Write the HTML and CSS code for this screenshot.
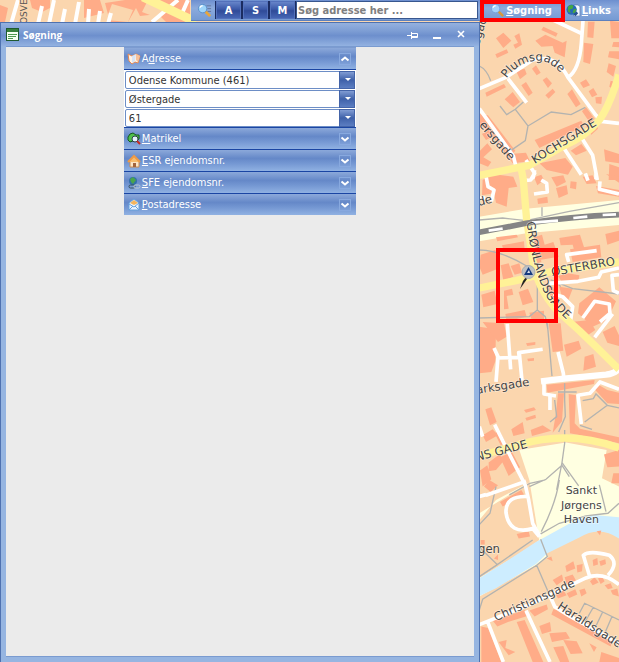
FILE: index.html
```
<!DOCTYPE html>
<html lang="da">
<head>
    <meta charset="UTF-8">
    <meta name="viewport" content="width=device-width, initial-scale=1.0">
    <title>Søgning</title>
    <link rel="stylesheet" href="styles.css">
</head>
<body>
    <svg class="map" viewBox="0 0 619 662" preserveAspectRatio="xMaxYMin slice" role="img" aria-label="Kort">
        <rect class="ground" width="619" height="662"/>

        <!-- nordvestlige hjørne -->
        <path class="building" d="M30 0H50V8L42 12L32 8ZM84 0H100L104 13L84 18ZM105 3L125 0H190V22H166L158 14L140 16L136 8L128 22H110ZM0 5L8 8L5 22H0Z"/>
        <path class="plot" d="M112 4L133 10L128 22L106 20ZM148 0L166 6L158 18L142 12Z"/>
        <path class="road" d="M11 24L18 0M38 24L42 6M49 24L54 0M62 24L65 9M75 24L79 2M88 24L89 9M98 24L100 11M108 24L111 13M152 22L178 0M180 18L188 0"/>
        <path class="road main" d="M143 -3L196 22"/>
        <text class="street" transform="translate(27 24) rotate(-90)">OSVE</text>

        <g transform="translate(476 20) scale(.3333)">
            <!-- park, bane og å -->
            <path class="park" d="M10 590L150 566L429 540V615L150 640L10 664Z"/>
            <path class="park" d="M130 1290L270 1268L392 1290L378 1375L429 1400V1500L190 1565L160 1380Z"/>
            <path class="park" d="M10 1730L190 1630L215 1612L190 1560L150 1590L10 1674ZM165 1385L60 1440L10 1500V1480Z"/>
            <path class="water" d="M10 1675L110 1612L180 1566L300 1500L355 1485L429 1492V1556Q370 1515 310 1553L214 1600L180 1632L60 1705L10 1728Z"/>

            <!-- bygninger -->
            <path class="building" d="M60 55L82 38L106 62L82 84ZM58 103L92 88L97 98L63 114ZM115 48L130 40L138 74L118 86L112 74L126 68ZM178 62L208 44L260 68L272 62L266 112L236 98L230 78L196 80ZM202 20L245 40L240 50L196 30ZM336 5H356L352 54L334 52ZM324 68L352 72L342 132L322 126ZM402 2L429 6V55H406ZM412 66H429V82L408 80ZM400 94H429V118L396 112ZM398 130L420 138L412 170L392 156ZM404 182L424 188L416 210L400 200ZM168 146L180 136L194 158L182 166ZM120 152L146 146L152 162L132 178ZM136 196L150 186L170 218L158 228ZM200 180L212 172L228 190L216 204ZM208 226L230 206L238 216L218 236ZM312 188L330 178L342 196L322 204ZM338 214L352 204L364 224L348 232ZM28 218L84 192L90 202L32 230ZM86 238L110 216L132 246L112 262ZM274 222L288 208L314 252L300 262ZM318 274L330 262L356 296L342 308ZM358 232L378 230L376 252L360 250ZM10 282L36 286L118 392L104 408L10 310ZM176 360L316 302L324 318L190 384ZM330 320L360 306L366 326L346 344ZM284 392L316 372L332 392L300 406ZM190 430L268 414L290 440L276 464L212 450ZM18 342L38 330L46 352L30 360ZM12 392L34 370L48 388L22 412L46 426L36 440L10 430ZM384 388L429 402V430L388 424ZM400 432L429 442V480H398ZM74 382L100 402L150 398L162 424L110 430Z"/>
            <path class="building" d="M48 462L112 470L124 500L98 504L92 560L60 548L54 520L18 526L20 480ZM174 472L196 464L204 480L184 496ZM226 472L262 466L270 486L242 500ZM240 504L272 496L276 522L248 534ZM284 484L302 486L300 508L282 504ZM320 470L350 466L362 490L332 492ZM360 498L429 510V530L366 520ZM390 462L429 470V488ZM184 536L214 530L216 548L186 552ZM60 652L122 644L126 652L64 664ZM78 676L144 664L146 690L84 696ZM174 652L198 644L206 674L232 666L248 710L178 722ZM250 654L312 644L330 700L300 710L290 674L254 676ZM14 704L58 690L66 746L20 764L10 740ZM74 736L98 730L112 770L82 782ZM104 738L130 730L138 758L116 764ZM180 702L192 696L196 726L184 730ZM282 688L372 674L376 712L290 726ZM388 642L429 632V662L394 674ZM246 768L276 760L310 766L308 784L260 790ZM16 824L56 812L64 852L22 862ZM84 812L108 806L112 824L92 828L98 866L84 868ZM128 816L156 806L172 846L140 856ZM88 882L146 870L152 890L92 904ZM214 792L232 802L242 842L226 846ZM250 800L290 806L276 842L258 832ZM310 850L370 802L420 844L394 900L350 920L306 880ZM60 928L10 920V1060L46 1056L58 1024ZM160 878L204 872V900L166 896Z"/>
            <path class="building" d="M218 910H254L262 992L230 996ZM264 974L308 962L316 986L272 1010ZM286 906L340 900L358 930L332 948ZM326 1010L352 1002L360 1040L322 1052ZM380 936L416 918L429 946V978L394 968ZM150 970L178 966V974L154 978ZM154 1016L174 1014V1022L156 1024ZM20 906L84 910L92 950L66 966ZM212 1094L356 1080L354 1092L214 1118ZM360 1090L394 1110L429 1118V1152L394 1150L358 1110ZM246 1120L264 1120L258 1204L230 1238L240 1180ZM278 1122L300 1126L296 1210L312 1226L429 1252V1270L282 1240ZM28 1168L46 1162L62 1206L42 1216ZM144 1170L174 1162L180 1170L150 1178ZM148 1194L178 1184L180 1194L152 1202ZM106 1228L140 1206L146 1240L112 1248ZM164 1230L200 1216L226 1232L168 1248ZM20 1246L50 1228L66 1246L30 1266ZM56 1240L70 1232L90 1270L74 1276ZM38 1328L70 1304L84 1322L60 1350L38 1354ZM72 1312L108 1296L132 1342L98 1368ZM12 1352L34 1336L46 1378L20 1400ZM384 1304L429 1290V1340L394 1342ZM412 1360H429V1390H406ZM40 1380L66 1396L44 1416L24 1400ZM72 1446L136 1410L144 1424L80 1460ZM122 1542L158 1534L162 1550L128 1556ZM14 1560H26V1574H14ZM54 1616L66 1604V1620Z"/>
            <path class="building" d="M362 1534L376 1532L372 1546ZM350 1620L364 1614L366 1634L352 1638ZM370 1624L388 1618L390 1632L374 1638ZM212 1616L226 1610L230 1624ZM268 1638L292 1624L298 1646L272 1656ZM302 1636L320 1632L318 1654L304 1658ZM230 1680L258 1664L262 1682L242 1696ZM266 1672L290 1664L300 1682L272 1692ZM234 1714L260 1708L272 1726L246 1736ZM272 1720L298 1708L304 1724L280 1734ZM310 1710L326 1706L332 1720L316 1730ZM342 1684L356 1672L368 1688L350 1696ZM366 1676L378 1670L386 1684L374 1692ZM386 1696L404 1690L410 1704L396 1708ZM404 1712L424 1706L429 1730L410 1724ZM232 1768L256 1772L412 1858L404 1880L226 1784ZM160 1772L212 1754L216 1768L176 1790ZM16 1820L36 1824L76 1926H16ZM50 1802L146 1770L154 1788L96 1806L64 1820ZM122 1806L146 1800L202 1926H170ZM68 1866L92 1860L88 1884L118 1896L98 1906ZM190 1818L222 1806L226 1834L198 1842ZM220 1840L270 1836L282 1856L228 1866ZM262 1860L302 1864L320 1900L284 1902ZM232 1882L262 1878L280 1926H252ZM340 1870L362 1882L354 1896ZM376 1896L429 1914V1926H370Z"/>

            <!-- stier -->
            <path class="trail" d="M10 138Q32 148 44 182M72 258L92 284L118 268L142 246M118 268L156 318L226 276L285 284L328 262M156 318L148 362L104 392M10 600L80 594L150 602L280 574L429 548M198 562V588M10 690Q70 690 152 738L184 770V870L160 890L10 894M184 870L208 890L216 930M214 910L228 1068M266 1090V1140L268 1190L248 1236M246 1116H302M236 1140L242 1190L222 1206M320 1142L352 1136L360 1122L394 1156L429 1164M394 1156L326 1206M312 1216L348 1228M266 1230V1270L258 1328L242 1410M258 1328L308 1398M258 1336L210 1378L160 1400M258 1336L280 1370M208 1380L162 1390L100 1425M250 1380Q240 1450 196 1535M190 1544L250 1510L330 1488L396 1480L429 1450M370 1395L390 1475M60 1400L42 1480L10 1514M10 1582L64 1634L170 1560M64 1634L10 1670M194 1558L214 1610L182 1636L20 1738L10 1770M182 1636L220 1724M310 1780L326 1750L429 1800M352 1762L328 1804M380 1776L358 1822M408 1790L388 1836M236 780L254 800M224 780L290 806L429 822"/>

            <!-- veje -->
            <path class="road" d="M200 -15L320 42M322 -10L316 70Q310 150 276 172M10 206L90 172L170 120Q240 100 276 172L360 286L376 304L429 310M96 176L152 248M10 266L112 408L120 440M262 382L316 464M312 346L350 406L364 480M150 420L176 460L164 480L140 482M30 468L36 500L54 510L46 544M10 534H28M164 478L172 472L176 450M174 522L214 516L212 490L196 480M328 460L336 482M360 460V478M429 522L370 508L372 484M278 726L272 704L362 692M220 790L306 784L368 772L376 756L429 744M429 764L408 766L412 812L429 820M232 822L260 830L290 860L284 900M320 894L356 844L400 852L402 880L372 906M54 984L66 1010L60 1086M64 1014L130 1012L128 998L200 988M94 912L104 1048M130 1000L138 1082M356 952L410 882M246 996L262 1060L264 1080M204 1082V1122L240 1128M222 1128V1170M429 1108L372 1086L342 1120L306 1126L316 1212M10 1220L20 1250M56 1214L100 1302L148 1396L158 1440L170 1510L192 1550M30 1426L150 1384M30 1424L10 1430M158 1430Q88 1425 90 1478Q100 1546 170 1526L190 1550M10 1814L100 1778L160 1754L330 1674Q380 1654 429 1694M340 1666L322 1606Q340 1590 400 1606Q430 1630 396 1666M36 1808L82 1926M150 1772L222 1926M222 1728L236 1760L280 1788L429 1870"/>
            <path class="road wide" d="M195 1084L264 1076L390 1064Q420 1060 429 1044"/>
            <path class="road main" d="M429 164Q400 260 370 300Q330 350 262 378L160 436L10 466M134 436L142 480L152 600L166 690Q174 800 250 878L310 932L370 990L429 1048M10 804L120 782L220 756L429 726M10 1308L130 1274Q280 1230 429 1284"/>
            <path class="rail" d="M10 637L150 610Q280 590 429 584"/>
            <path class="rail-dash" d="M38 632L80 626M168 608L246 602M292 594L334 590M380 585L420 583"/>

            <!-- gadenavne -->
            <path id="plums" class="guide" d="M92 176Q130 120 196 122Q240 132 286 196"/>
            <path id="groen" class="guide" d="M152 606Q164 720 202 812Q226 866 320 940"/>
            <text class="label"><textPath href="#plums">Plumsgade</textPath></text>
            <text class="label" transform="translate(10 75) rotate(-74)">sgade</text>
            <text class="label" transform="translate(8 316) rotate(49)">ersgade</text>
            <text class="label" transform="translate(176 432) rotate(-32)">KOCHSGADE</text>
            <text class="label" transform="translate(8 558) rotate(-14)">de</text>
            <text class="label"><textPath href="#groen">GRØNLANDSGADE</textPath></text>
            <text class="label" transform="translate(228 768) rotate(-10)">ØSTERBRO</text>
            <text class="label" transform="translate(2 1122) rotate(-9)">arksgade</text>
            <text class="label" transform="translate(2 1324) rotate(-15)">NS GADE</text>
            <text class="label place" x="316" y="1422">Sankt</text>
            <text class="label place" x="316" y="1466">Jørgens</text>
            <text class="label place" x="316" y="1510">Haven</text>
            <text class="label" x="6" y="1600">gen</text>
            <text class="label" transform="translate(60 1804) rotate(-24)">Christiansgade</text>
            <text class="label" transform="translate(242 1764) rotate(33)">Haraldsgade</text>
        </g>

        <!-- fundet adresse -->
        <path d="M520 289L523 281L526 277L527 279Z" fill="#222"/>
        <circle cx="528.500" cy="272" r="6.500" fill="#bdc1c5" stroke="#a9adb2"/>
        <path d="M524 275L528.500 267L533 275Z" fill="#143a80"/>
        <path d="M527 273L529 270L530 273Z" fill="#dce3ee"/>
        <rect class="marker" x="498" y="250" width="58" height="71"/>
    </svg>

    <div class="app">
        <header class="toolbar">
            <svg class="icon" viewBox="0 0 16 16" aria-hidden="true">
                <path d="M10 3H15M11 6H15M11 9H15" stroke="#62759c"/>
                <path d="M9 9L14 14" stroke="#e9a63a" stroke-width="3"/>
                <circle cx="6" cy="6" r="4.500" fill="#9ed5fa" stroke="#5a8fca"/>
                <path d="M3 5Q4 3 6 3" stroke="#fff" fill="none" stroke-width="1.500"/>
            </svg>
            <div class="modes">
                <button class="mode">A</button>
                <button class="mode">S</button>
                <button class="mode">M</button>
            </div>
            <input class="search" type="text" aria-label="Søg adresse" placeholder="Søg adresse her ...">
            <button class="tool tool-search">
                <svg class="icon" viewBox="0 0 16 16" aria-hidden="true">
                    <path d="M9 9L14 14" stroke="#d99839" stroke-width="2.500"/>
                    <circle cx="6" cy="6" r="4.500" fill="#a5d2fa" stroke="#74a0dc"/>
                    <path d="M3 5Q4 3 6 3" stroke="#fff" fill="none" stroke-width="1.500"/>
                </svg>
                <span><u>S</u>øgning</span>
            </button>
            <button class="tool">
                <svg class="icon" viewBox="0 0 16 16" aria-hidden="true">
                    <path d="M8 2H13L15 4V14H8Z" fill="#f4f8ff" stroke="#6488bc"/>
                    <circle cx="6" cy="7" r="5.500" fill="#2769b8"/>
                    <path d="M2 4Q5 1 8 3L7 6L4 7L5 11L2 9ZM8 7L11 6L10 10L7 11Z" fill="#46a843"/>
                    <path d="M8 12L11 9L13 11L10 14Z" fill="#234f91"/>
                </svg>
                <span><u>L</u>inks</span>
            </button>
        </header>

        <section class="window">
            <div class="titlebar">
                <svg class="title-icon" viewBox="0 0 13 13" aria-hidden="true">
                    <rect x=".5" y=".5" width="12" height="12" fill="#f6fff2" stroke="#1f5a31"/>
                    <path d="M1 1H12V4H1Z" fill="#37803c"/>
                    <path d="M2 6.500H11M2 8.500H10M2 10.500H7" stroke="#4d9b50"/>
                </svg>
                <h1>Søgning</h1>
                <div class="window-buttons">
                    <button aria-label="Fastgør">
                        <svg viewBox="0 0 12 12"><path d="M0 6.500H4M4.500 3V10M4 4.500H10.500V8.500H4M4 7.500H10"/></svg>
                    </button>
                    <button aria-label="Minimer">
                        <svg viewBox="0 0 12 12"><path d="M2 9H10" stroke-width="2"/></svg>
                    </button>
                    <button aria-label="Luk">
                        <svg viewBox="0 0 12 12"><path d="M3 2L9 8M9 2L3 8" stroke-width="1.600"/></svg>
                    </button>
                </div>
            </div>

            <div class="content">
                <div class="accordion">
                    <button class="row" aria-expanded="true">
                        <svg class="row-icon" viewBox="0 0 14 14" aria-hidden="true">
                            <path d="M1 2L5 4L9 2L13 4L11 11L8 10L5 12L2 9Z" fill="#fff3e6" stroke="#e58a54"/>
                            <path d="M5 4V11L8 9L9 2Z" fill="#d7e4f5"/>
                            <path d="M9 2L13 4L11 10L9 8Z" fill="#f6c19a"/>
                        </svg>
                        <span>A<u>d</u>resse</span>
                        <svg class="chevron" viewBox="0 0 10 10" aria-hidden="true"><path d="M1.500 6.500L5 3.500L8.500 6.500"/></svg>
                    </button>
                    <div class="fields">
                        <div class="combo">
                            <select aria-label="Kommune"><option>Odense Kommune (461)</option></select>
                        </div>
                        <div class="combo">
                            <select aria-label="Vej"><option>Østergade</option></select>
                        </div>
                        <div class="combo">
                            <select aria-label="Husnummer"><option>61</option></select>
                        </div>
                    </div>
                    <button class="row" aria-expanded="false">
                        <svg class="row-icon" viewBox="0 0 14 14" aria-hidden="true">
                            <path d="M1 5L3 2L6 1L9 3L12 3L12 7L9 9L6 9L3 10L1 8Z" fill="#4fc04b" stroke="#145a20"/>
                            <circle cx="8" cy="7" r="3" fill="#e4f4fb" stroke="#31404e"/>
                            <path d="M10 9L13 12" stroke="#c62a22" stroke-width="2"/>
                        </svg>
                        <span><u>M</u>atrikel</span>
                        <svg class="chevron" viewBox="0 0 10 10" aria-hidden="true"><path d="M1.500 3.500L5 6.500L8.500 3.500"/></svg>
                    </button>
                    <button class="row" aria-expanded="false">
                        <svg class="row-icon" viewBox="0 0 14 14" aria-hidden="true">
                            <path d="M3 7H12V13H3Z" fill="#fbe5c6" stroke="#cd8a4c"/>
                            <path d="M1 8L7 2L13 8" fill="#f8bd6e" stroke="#ee9a46" stroke-width="2"/>
                            <path d="M6 9H9V13H6Z" fill="#a4643c"/>
                        </svg>
                        <span><u>E</u>SR ejendomsnr.</span>
                        <svg class="chevron" viewBox="0 0 10 10" aria-hidden="true"><path d="M1.500 3.500L5 6.500L8.500 3.500"/></svg>
                    </button>
                    <button class="row" aria-expanded="false">
                        <svg class="row-icon" viewBox="0 0 14 14" aria-hidden="true">
                            <circle cx="6" cy="5" r="4" fill="#3270aa"/>
                            <path d="M3 3L6 1L9 4L6 8L4 6Z" fill="#49a54b"/>
                            <rect x="2" y="9" width="6" height="3" rx="1.500" fill="none" stroke="#34505f"/>
                            <rect x="7" y="9" width="6" height="3" rx="1.500" fill="none" stroke="#bdc9d3"/>
                        </svg>
                        <span><u>S</u>FE ejendomsnr.</span>
                        <svg class="chevron" viewBox="0 0 10 10" aria-hidden="true"><path d="M1.500 3.500L5 6.500L8.500 3.500"/></svg>
                    </button>
                    <button class="row" aria-expanded="false">
                        <svg class="row-icon" viewBox="0 0 14 14" aria-hidden="true">
                            <path d="M2 5L7 1L12 5V12H2Z" fill="#e7f2ff" stroke="#67a1dc"/>
                            <path d="M3 5L7 2L11 5L7 7Z" fill="#f4b45c"/>
                            <path d="M2 6L7 9L12 5M2 12L6 8M12 12L8 8" fill="none" stroke="#67a1dc"/>
                        </svg>
                        <span><u>P</u>ostadresse</span>
                        <svg class="chevron" viewBox="0 0 10 10" aria-hidden="true"><path d="M1.500 3.500L5 6.500L8.500 3.500"/></svg>
                    </button>
                </div>
            </div>
        </section>
    </div>
</body>
</html>
```

FILE: styles.css
```
* {
    box-sizing: border-box;
}
body {
    margin: 0;
    font-family: "DejaVu Sans Condensed", Tahoma, Verdana, sans-serif;
    font-size: 11px;
    color: #333;
}
button {
    border: none;
    padding: 0;
    background: none;
    font: inherit;
    color: #fff;
    cursor: pointer;
}

/* Kort */
.map {
    position: absolute;
    inset: 0;
    width: 100%;
    height: 100%;
    font-family: "DejaVu Sans", Verdana, sans-serif;
}
.ground, .plot {
    fill: #fbd6ae;
}
.building {
    fill: #ffac88;
}
.park {
    fill: #ffffe1;
}
.water {
    fill: #cdedff;
}
.road, .trail, .rail, .rail-dash, .guide, .marker {
    fill: none;
}
.road {
    stroke: #fff;
    stroke-width: 11;
    stroke-linejoin: round;
}
.map > .road {
    stroke-width: 4;
}
.road.wide {
    stroke-width: 19;
}
.road.main {
    stroke: #fff297;
    stroke-width: 22;
}
.map > .road.main {
    stroke-width: 9;
}
.trail {
    stroke: #b3b3b0;
    stroke-width: 4;
}
.rail {
    stroke: #858585;
    stroke-width: 17;
}
.rail-dash {
    stroke: #fff;
    stroke-width: 8;
}
.street {
    font-size: 9px;
    fill: #555;
}
.label {
    font-size: 35px;
    fill: #444;
    stroke: #fff;
    stroke-opacity: 0.5;
    stroke-width: 4;
    paint-order: stroke;
}
.label.place {
    font-size: 33px;
    text-anchor: middle;
}
.marker {
    stroke: #f00;
    stroke-width: 4;
}

/* Værktøjslinje */
.app {
    position: relative;
    display: flex;
    flex-direction: column;
    min-height: 100vh;
}
.toolbar {
    display: flex;
    align-items: center;
    height: 21px;
    margin-left: 191px;
    padding-left: 6px;
    background: linear-gradient(#6d8fcf, #8cabdd 40%, #759ad3);
    border-bottom: 1px solid #5d80bd;
}
.icon {
    width: 15px;
    height: 15px;
    flex: none;
}
.modes {
    display: flex;
    margin-left: 3px;
    padding: 0 1px;
    gap: 2px;
    background: #1b2c61;
}
.mode {
    width: 25px;
    height: 18px;
    background: linear-gradient(#6684c9, #3b59a8 45%, #304b98 55%, #4565b4);
    border: 1px solid #5371bb;
    font-weight: bold;
}
.search {
    flex: 1;
    min-width: 0;
    height: 18px;
    padding: 0 1px;
    border: 1px solid #38578f;
    background: #fff;
    font: inherit;
    font-weight: bold;
}
.search::placeholder {
    color: #808080;
    opacity: 1;
}
.tool {
    display: flex;
    align-items: center;
    gap: 1px;
    height: 20px;
    padding: 0 8px 0 1px;
    font-weight: bold;
}
.tool-search {
    position: relative;
    margin-left: 2px;
    padding: 0 13px 0 10px;
}
.tool-search::after {
    content: "";
    position: absolute;
    inset: 0 0 -2px;
    border: 4px solid #f00;
}

/* Vindue */
.window {
    flex: 1;
    display: flex;
    flex-direction: column;
    width: 77.5%;
    margin-top: 1px;
    padding: 0 5px 5px;
    background: #96b5e1;
    border: 1px solid #4f72b0;
    border-bottom-width: 0;
}
.titlebar {
    display: flex;
    align-items: center;
    height: 23px;
    margin: 0 -5px;
    padding: 0 5px;
    gap: 4px;
    background: linear-gradient(#95b1df, #7d9dd4 35%, #6d8fcd 55%, #93b2e1);
}
.title-icon {
    width: 13px;
    height: 13px;
}
.titlebar h1 {
    flex: 1;
    margin: 0;
    font: bold 10px "Open Sans", Tahoma, sans-serif;
    color: #fff;
}
.window-buttons {
    display: flex;
    gap: 12px;
    padding-right: 7px;
}
.window-buttons button {
    width: 12px;
    height: 12px;
}
.window-buttons svg {
    display: block;
    fill: none;
    stroke: #fff;
}
.content {
    flex: 1;
    background: #ebebeb;
    border: 1px solid #7a9bd0;
    border-width: 1px 0;
}

/* Søgepaneler */
.accordion {
    width: 232px;
    margin: 0 auto;
}
.row {
    display: flex;
    align-items: center;
    width: 100%;
    height: 22px;
    padding: 0 5px 0 3px;
    gap: 1px;
    background: linear-gradient(#8ca9da, #6588c8 40%, #7598d3 65%, #90b1e2);
    border-top: 1px solid #1a45a3;
    text-align: left;
}
.row:first-child {
    border-top-color: #7c9bd0;
}
.row span {
    flex: 1;
}
.row-icon {
    width: 14px;
    height: 14px;
}
.chevron {
    width: 12px;
    height: 12px;
    border: 1px solid #88a9df;
    fill: none;
    stroke: #fff;
    stroke-width: 2;
}
.fields {
    display: flex;
    flex-direction: column;
    gap: 1px;
    padding: 1px 1px 0;
    background: #fff;
    border-top: 1px solid #1a45a3;
}
.combo {
    position: relative;
}
.combo select {
    display: block;
    width: 100%;
    height: 18px;
    padding: 0 14px 0 3px;
    appearance: none;
    background: #fff;
    border: 1px solid #6d8ec6;
    border-radius: 2px;
    font: inherit;
    color: #333;
}
.combo::before {
    content: "";
    position: absolute;
    top: 0;
    right: 0;
    bottom: 0;
    width: 14px;
    background: linear-gradient(#819cd3, #3f61a9 50%, #5c7ec2);
    border: 1px solid #4464a8;
    pointer-events: none;
}
.combo::after {
    content: "";
    position: absolute;
    top: 7px;
    right: 4px;
    border: 3px solid transparent;
    border-top-color: #fff;
    pointer-events: none;
}
```
